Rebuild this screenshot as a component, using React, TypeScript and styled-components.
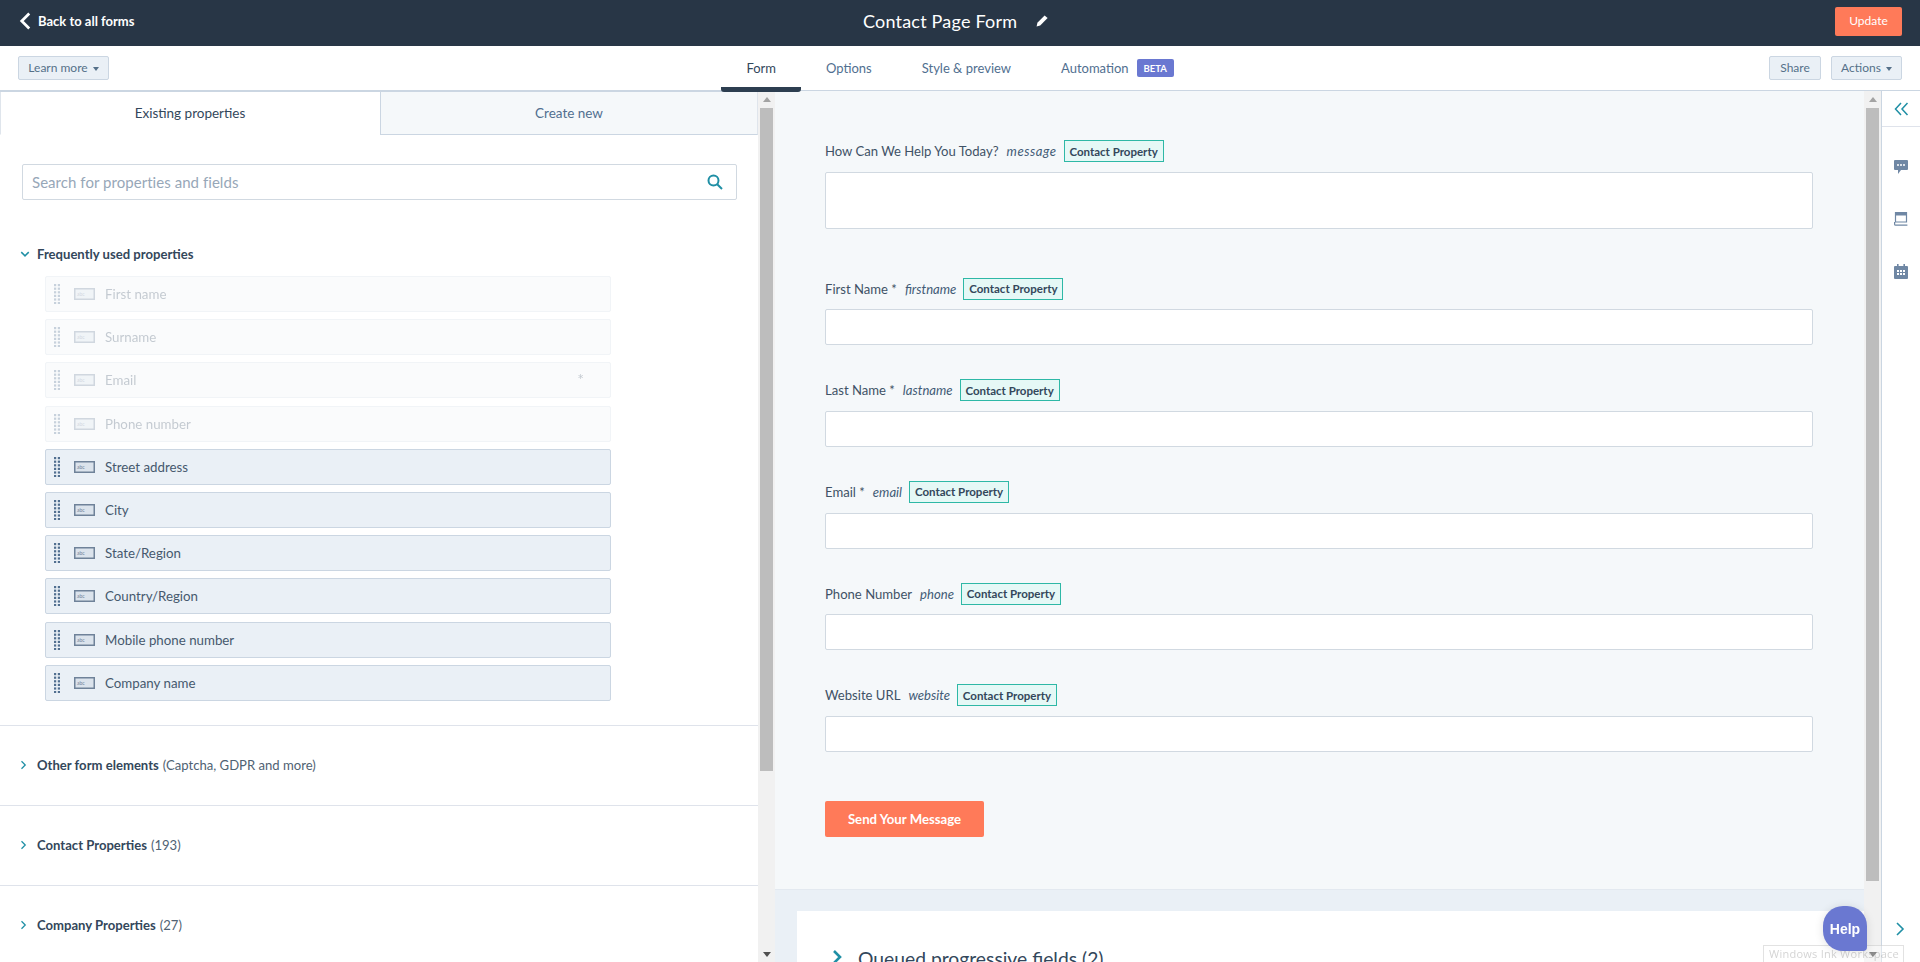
import React from 'react';
import styled, { createGlobalStyle } from 'styled-components';

const GlobalStyle = createGlobalStyle`
  html, body {
    margin: 0;
    padding: 0;
    height: 100%;
    overflow: hidden;
    background: #fff;
  }
  body {
    font-family: Lato, "Open Sans", "Liberation Sans", sans-serif;
    color: #33475b;
  }
  * {
    box-sizing: border-box;
  }
`;

const properties = [
  { name: 'First name', used: true },
  { name: 'Surname', used: true },
  { name: 'Email', used: true, required: true },
  { name: 'Phone number', used: true },
  { name: 'Street address' },
  { name: 'City' },
  { name: 'State/Region' },
  { name: 'Country/Region' },
  { name: 'Mobile phone number' },
  { name: 'Company name' },
];

const fields = [
  { label: 'How Can We Help You Today?', name: 'message', big: true },
  { label: 'First Name *', name: 'firstname' },
  { label: 'Last Name *', name: 'lastname' },
  { label: 'Email *', name: 'email' },
  { label: 'Phone Number', name: 'phone' },
  { label: 'Website URL', name: 'website' },
];

const Chevron: React.FC<{ dir: 'left' | 'right' | 'down'; size: number; width?: number; color: string }> = ({
  dir,
  size,
  width = 2,
  color,
}) => {
  const points = {
    left: '9,2 3,8 9,14',
    right: '4,2 10,8 4,14',
    down: '2,5 8,11 14,5',
  }[dir];
  return (
    <svg width={size} height={size} viewBox="0 0 16 16" fill="none">
      <polyline points={points} stroke={color} strokeWidth={width} />
    </svg>
  );
};

const DragHandle: React.FC = () => (
  <svg width="6" height="20" viewBox="0 0 6 20" fill="currentColor">
    {[0, 3.6, 7.2, 10.8, 14.4, 18].map((y) => (
      <g key={y}>
        <rect x="0" y={y} width="2.2" height="2.2" />
        <rect x="3.8" y={y} width="2.2" height="2.2" />
      </g>
    ))}
  </svg>
);

const TextInputIcon: React.FC = () => (
  <svg width="21" height="12" viewBox="0 0 21 12">
    <rect x="0.75" y="0.75" width="19.5" height="10.5" fill="#dbe3ec" stroke="#6f8299" strokeWidth="1.5" />
    <text x="3" y="8" fontSize="5" fill="#6f8299" fontFamily="Lato, sans-serif">
      abc
    </text>
  </svg>
);

const Caret = styled.span`
  display: inline-block;
  width: 0;
  height: 0;
  margin-left: 5px;
  border-left: 3.5px solid transparent;
  border-right: 3.5px solid transparent;
  border-top: 4px solid currentColor;
  vertical-align: middle;
`;

const Page = styled.div`
  display: flex;
  flex-direction: column;
  width: 100vw;
  height: 100vh;
  overflow: hidden;
`;

const TopBar = styled.header`
  position: relative;
  display: flex;
  flex: 0 0 46px;
  align-items: center;
  justify-content: space-between;
  padding: 0 18px 3px 18px;
  background: #283646;
  color: #fff;
`;

const BackLink = styled.a`
  display: flex;
  align-items: center;
  padding-bottom: 2px;
  font-size: 13px;
  font-weight: 700;
`;

const TitleBlock = styled.div`
  position: absolute;
  left: 863px;
  top: 0;
  display: flex;
  align-items: center;
  gap: 19px;
  height: 42px;
  font-size: 18px;
  letter-spacing: 0.2px;
`;

const UpdateButton = styled.button`
  width: 67px;
  height: 29px;
  padding: 0 0 2px;
  border: 0;
  border-radius: 2px;
  background: #ff7a59;
  color: #fff;
  font: inherit;
  font-size: 12px;
`;

const SubBar = styled.nav`
  position: relative;
  z-index: 1;
  display: grid;
  flex: 0 0 45px;
  grid-template-columns: 1fr auto 1fr;
  grid-template-rows: 44px;
  align-items: start;
  padding: 0 18px;
  border-bottom: 1px solid #cbd6e2;
`;

const ButtonRow = styled.div<{ $end?: boolean }>`
  display: flex;
  justify-content: ${(p) => (p.$end ? 'flex-end' : 'flex-start')};
  gap: 10px;
  padding-top: 10px;
`;

const GhostButton = styled.button<{ $w: number }>`
  width: ${(p) => p.$w}px;
  height: 24px;
  padding: 0 0 1px;
  border: 1px solid #cbd6e2;
  border-radius: 2px;
  background: #eaf0f6;
  color: #557089;
  font: inherit;
  font-size: 12px;
`;

const Tabs = styled.div`
  display: flex;
  height: 46px;
`;

const Tab = styled.div<{ $active?: boolean }>`
  display: flex;
  align-items: center;
  gap: 8px;
  height: 46px;
  padding: 3px 25px 0;
  border-bottom: 5px solid ${(p) => (p.$active ? '#2d3e50' : 'transparent')};
  border-radius: 0 0 3px 3px;
  color: ${(p) => (p.$active ? '#33475b' : '#516f90')};
  font-size: 13px;
`;

const Beta = styled.span`
  display: inline-flex;
  align-items: center;
  justify-content: center;
  width: 37px;
  height: 18px;
  border-radius: 2px;
  background: #6a78d1;
  color: #fff;
  font-size: 9.5px;
  font-weight: 700;
`;

const Workspace = styled.main`
  display: flex;
  flex: 1;
  min-height: 0;
`;

const LeftColumn = styled.section`
  flex: 0 0 758px;
  overflow: hidden;
`;

const PanelTabs = styled.div`
  display: flex;
  height: 44px;
  border-top: 1px solid #cbd6e2;
`;

const PanelTab = styled.div<{ $active?: boolean }>`
  display: flex;
  flex: 0 0 ${(p) => (p.$active ? '380px' : '378px')};
  align-items: center;
  justify-content: center;
  padding-bottom: 1px;
  border-bottom: 1px solid ${(p) => (p.$active ? 'transparent' : '#cbd6e2')};
  border-left: 1px solid ${(p) => (p.$active ? '#dfe5ec' : '#cbd6e2')};
  border-right: 1px solid ${(p) => (p.$active ? 'transparent' : '#dfe5ec')};
  background: ${(p) => (p.$active ? '#fff' : '#f5f8fa')};
  color: ${(p) => (p.$active ? '#33475b' : '#516f90')};
  font-size: 13.5px;
`;

const SearchBox = styled.div`
  display: flex;
  align-items: center;
  justify-content: space-between;
  height: 36px;
  margin: 29px 21px 0 22px;
  padding: 0 13px 0 9px;
  border: 1px solid #d1d9e1;
  border-radius: 2px;
  color: #97a7b8;
  font-size: 15px;
  letter-spacing: 0.05px;
`;

const GroupHeader = styled.div`
  display: flex;
  align-items: center;
  gap: 7px;
  margin: 44px 0 12px 20px;
  height: 20px;
  font-size: 13.1px;
  font-weight: 700;
`;

const PropertyList = styled.div`
  display: flex;
  flex-direction: column;
  gap: 7.2px;
  width: 566px;
  margin-left: 45px;
`;

const PropertyRow = styled.div<{ $used?: boolean }>`
  display: flex;
  align-items: center;
  height: 36px;
  padding: 0 26px 0 8px;
  border: 1px solid ${(p) => (p.$used ? '#f1f4f7' : '#cbd6e2')};
  border-radius: 2px;
  background: ${(p) => (p.$used ? '#fafbfc' : '#eaf0f6')};
  color: #46596e;
  font-size: 13.3px;
`;

const RowInner = styled.div<{ $used?: boolean }>`
  display: flex;
  flex: 1;
  align-items: center;
  gap: 10px;
  opacity: ${(p) => (p.$used ? 0.3 : 1)};
`;

const Grip = styled.span`
  display: flex;
  margin-right: 4px;
  color: #516f90;
`;

const RowLabel = styled.span`
  flex: 1;
`;

const RequiredMark = styled.span`
  margin-top: -4px;
  font-size: 16px;
`;

const SectionDivider = styled.div`
  height: 25px;
  border-bottom: 1px solid #dfe3eb;
`;

const Section = styled.div`
  display: flex;
  align-items: center;
  gap: 8px;
  height: 80px;
  padding-left: 19px;
  border-bottom: 1px solid #dfe3eb;
  font-size: 13.1px;
`;

const SectionName = styled.strong`
  font-weight: 700;
`;

const SectionNote = styled.span`
  margin-left: -4px;
  color: #506273;
`;

const ScrollTrack = styled.div`
  display: flex;
  flex: 0 0 17px;
  flex-direction: column;
  align-items: center;
  background: #f1f1f1;

  &::before {
    content: '';
    margin: 6px 0 6px;
    border-left: 4px solid transparent;
    border-right: 4px solid transparent;
    border-bottom: 5px solid #a3a3a3;
  }
`;

const ScrollThumb = styled.div<{ $h: number }>`
  flex: 0 0 ${(p) => p.$h}px;
  width: 13px;
  background: #bdbdbd;
`;

const ScrollDown = styled.div`
  margin-top: auto;
  margin-bottom: 5px;
  border-left: 4px solid transparent;
  border-right: 4px solid transparent;
  border-top: 5px solid #505050;
`;

const FormColumn = styled.section`
  display: flex;
  flex: 1;
  flex-direction: column;
  min-width: 0;
  overflow: hidden;
`;

const FormArea = styled.div`
  flex: 0 0 798px;
  padding: 49px 51px 0 50px;
  background: #f5f8fa;
`;

const Field = styled.div<{ $big?: boolean }>`
  margin-bottom: ${(p) => (p.$big ? '49px' : '34.1px')};
`;

const LabelRow = styled.div`
  display: flex;
  align-items: center;
  height: 22px;
  margin-bottom: 9.6px;
  color: #3f5266;
  font-size: 13.1px;
  white-space: pre;
`;

const FieldName = styled.em<{ $big?: boolean }>`
  margin-left: 8px;
  color: #425b76;
  font-style: italic;
  letter-spacing: ${(p) => (p.$big ? '0.55px' : '0')};
`;

const PropertyBadge = styled.span`
  display: inline-flex;
  align-items: center;
  justify-content: center;
  width: 100px;
  height: 22px;
  margin-left: 7px;
  border: 1px solid #2eb8a6;
  background: #e5f8f6;
  color: #33475b;
  font-size: 11.5px;
  font-weight: 700;
`;

const FakeInput = styled.div<{ $big?: boolean }>`
  height: ${(p) => (p.$big ? '57px' : '36px')};
  border: 1px solid #d1d9e1;
  border-radius: 2px;
  background: #fff;
`;

const SubmitButton = styled.button`
  display: block;
  width: 159px;
  height: 36px;
  margin-top: 48.6px;
  border: 0;
  border-radius: 2px;
  background: #ff7a59;
  color: #fff;
  font: inherit;
  font-size: 13.2px;
  font-weight: 700;
`;

const QueuedBand = styled.div`
  flex: 1;
  padding: 21px 0 0 22px;
  border-top: 1px solid #e3e9f0;
  background: #eaf0f6;
`;

const QueuedCard = styled.div`
  display: flex;
  align-items: flex-start;
  gap: 12px;
  height: 100%;
  padding: 36px 0 0 33px;
  background: #fff;
  font-size: 19.3px;
  line-height: 24px;
`;

const QueuedChevron = styled.span`
  display: flex;
  margin-top: 2px;
`;

const SideRail = styled.aside`
  display: flex;
  flex: 0 0 39px;
  flex-direction: column;
  align-items: center;
  border-left: 1px solid #cbd6e2;
`;

const RailTop = styled.div`
  display: flex;
  flex: 0 0 36px;
  align-items: center;
  justify-content: center;
  width: 100%;
  border-bottom: 1px solid #dfe3eb;
`;

const RailIcon = styled.div`
  display: flex;
  margin-top: 33px;
  color: #6f87a4;

  &:nth-of-type(n + 3) {
    margin-top: 38px;
  }
`;

const RailBottom = styled.div`
  display: flex;
  margin-top: auto;
  margin-bottom: 25px;
`;

const HelpBubble = styled.button`
  position: fixed;
  left: 1823px;
  top: 906px;
  z-index: 3;
  width: 44px;
  height: 45px;
  padding: 0;
  border: 0;
  border-radius: 20px 20px 4px 20px;
  background: #6a78d1;
  box-shadow: 0 1px 10px rgba(0, 0, 0, 0.12);
  color: #fff;
  font-family: "Liberation Sans", Arial, sans-serif;
  font-size: 14px;
  font-weight: 700;
`;

const InkTooltip = styled.div`
  position: fixed;
  left: 1763px;
  top: 945px;
  z-index: 2;
  width: 141px;
  height: 17px;
  padding: 0 5px;
  border: 1px solid rgba(190, 190, 190, 0.45);
  border-bottom: 0;
  background: rgba(255, 255, 255, 0.35);
  color: rgba(110, 110, 110, 0.3);
  font-family: "Open Sans", sans-serif;
  font-size: 11px;
  line-height: 15px;
  letter-spacing: 0.25px;
  white-space: nowrap;
`;

const App: React.FC<{}> = () => {
  return (
    <Page>
      <GlobalStyle />
      <TopBar>
        <BackLink>
          <Chevron dir="left" size={20} width={2.2} color="#fff" />
          Back to all forms
        </BackLink>
        <TitleBlock>
          Contact Page Form
          <svg width="12" height="12" viewBox="0 0 12 12" fill="#fff">
            <path d="M8.6 0.4 11.6 3 4.2 10.4 0.6 11.6 1.4 7.8Z" />
          </svg>
        </TitleBlock>
        <UpdateButton>Update</UpdateButton>
      </TopBar>

      <SubBar>
        <ButtonRow>
          <GhostButton $w={91}>
            Learn more
            <Caret />
          </GhostButton>
        </ButtonRow>
        <Tabs>
          <Tab $active>Form</Tab>
          <Tab>Options</Tab>
          <Tab>Style &amp; preview</Tab>
          <Tab>
            Automation
            <Beta>BETA</Beta>
          </Tab>
        </Tabs>
        <ButtonRow $end>
          <GhostButton $w={52}>Share</GhostButton>
          <GhostButton $w={71}>
            Actions
            <Caret />
          </GhostButton>
        </ButtonRow>
      </SubBar>

      <Workspace>
        <LeftColumn>
          <PanelTabs>
            <PanelTab $active>Existing properties</PanelTab>
            <PanelTab>Create new</PanelTab>
          </PanelTabs>
          <SearchBox>
            Search for properties and fields
            <svg width="16" height="16" viewBox="0 0 16 16" fill="none" stroke="#1f8fa5" strokeWidth="2">
              <circle cx="6.5" cy="6.5" r="5" />
              <line x1="10.2" y1="10.2" x2="15" y2="15" />
            </svg>
          </SearchBox>
          <GroupHeader>
            <Chevron dir="down" size={10} width={2.4} color="#1f8fa5" />
            Frequently used properties
          </GroupHeader>
          <PropertyList>
            {properties.map((item) => (
              <PropertyRow key={item.name} $used={item.used}>
                <RowInner $used={item.used}>
                  <Grip>
                    <DragHandle />
                  </Grip>
                  <TextInputIcon />
                  <RowLabel>{item.name}</RowLabel>
                  {item.required && <RequiredMark>*</RequiredMark>}
                </RowInner>
              </PropertyRow>
            ))}
          </PropertyList>
          <SectionDivider />
          <Section>
            <Chevron dir="right" size={10} width={2} color="#1f8fa5" />
            <SectionName>Other form elements</SectionName>
            <SectionNote>(Captcha, GDPR and more)</SectionNote>
          </Section>
          <Section>
            <Chevron dir="right" size={10} width={2} color="#1f8fa5" />
            <SectionName>Contact Properties</SectionName>
            <SectionNote>(193)</SectionNote>
          </Section>
          <Section>
            <Chevron dir="right" size={10} width={2} color="#1f8fa5" />
            <SectionName>Company Properties</SectionName>
            <SectionNote>(27)</SectionNote>
          </Section>
        </LeftColumn>
        <ScrollTrack>
          <ScrollThumb $h={663} />
          <ScrollDown />
        </ScrollTrack>

        <FormColumn>
          <FormArea>
            {fields.map((f) => (
              <Field key={f.name} $big={f.big}>
                <LabelRow>
                  {f.label}
                  <FieldName $big={f.big}>{f.name}</FieldName>
                  <PropertyBadge>Contact Property</PropertyBadge>
                </LabelRow>
                <FakeInput $big={f.big} />
              </Field>
            ))}
            <SubmitButton>Send Your Message</SubmitButton>
          </FormArea>
          <QueuedBand>
            <QueuedCard>
              <QueuedChevron>
                <Chevron dir="right" size={16} width={2.6} color="#1f8fa5" />
              </QueuedChevron>
              Queued progressive fields (2)
            </QueuedCard>
          </QueuedBand>
        </FormColumn>
        <ScrollTrack>
          <ScrollThumb $h={773} />
          <ScrollDown />
        </ScrollTrack>

        <SideRail>
          <RailTop>
            <svg width="15" height="14" viewBox="0 0 15 14" fill="none" stroke="#1f8fa5" strokeWidth="1.5">
              <polyline points="7,1 1.5,7 7,13" />
              <polyline points="13.5,1 8,7 13.5,13" />
            </svg>
          </RailTop>
          <RailIcon>
            <svg width="14" height="14" viewBox="0 0 14 14" fill="currentColor">
              <path d="M1 0h12a1 1 0 0 1 1 1v8a1 1 0 0 1-1 1H7l-3 4v-4H1a1 1 0 0 1-1-1V1a1 1 0 0 1 1-1Z" />
              <circle cx="4" cy="5" r="1" fill="#fff" />
              <circle cx="7" cy="5" r="1" fill="#fff" />
              <circle cx="10" cy="5" r="1" fill="#fff" />
            </svg>
          </RailIcon>
          <RailIcon>
            <svg width="14" height="14" viewBox="0 0 14 14" fill="none" stroke="currentColor" strokeWidth="1.2">
              <path d="M1.5 0.6h11v9.4h-11Z" />
              <path d="M1 0h12v3.5H1Z" fill="currentColor" stroke="none" />
              <path d="M0.6 10v2.2a1 1 0 0 0 1 1h11.8" />
            </svg>
          </RailIcon>
          <RailIcon>
            <svg width="14" height="15" viewBox="0 0 14 15" fill="currentColor">
              <path d="M1 2h12a1 1 0 0 1 1 1v11a1 1 0 0 1-1 1H1a1 1 0 0 1-1-1V3a1 1 0 0 1 1-1Z" />
              <rect x="3" y="0" width="1.6" height="3" />
              <rect x="9.4" y="0" width="1.6" height="3" />
              <g fill="#fff">
                <rect x="3" y="6" width="2" height="2" />
                <rect x="6" y="6" width="2" height="2" />
                <rect x="9" y="6" width="2" height="2" />
                <rect x="3" y="9" width="2" height="2" />
                <rect x="6" y="9" width="2" height="2" />
                <rect x="9" y="9" width="2" height="2" />
              </g>
            </svg>
          </RailIcon>
          <RailBottom>
            <Chevron dir="right" size={16} width={1.6} color="#1f8fa5" />
          </RailBottom>
        </SideRail>
      </Workspace>

      <InkTooltip>Windows Ink Workspace</InkTooltip>
      <HelpBubble>Help</HelpBubble>
    </Page>
  );
};

export default App;
